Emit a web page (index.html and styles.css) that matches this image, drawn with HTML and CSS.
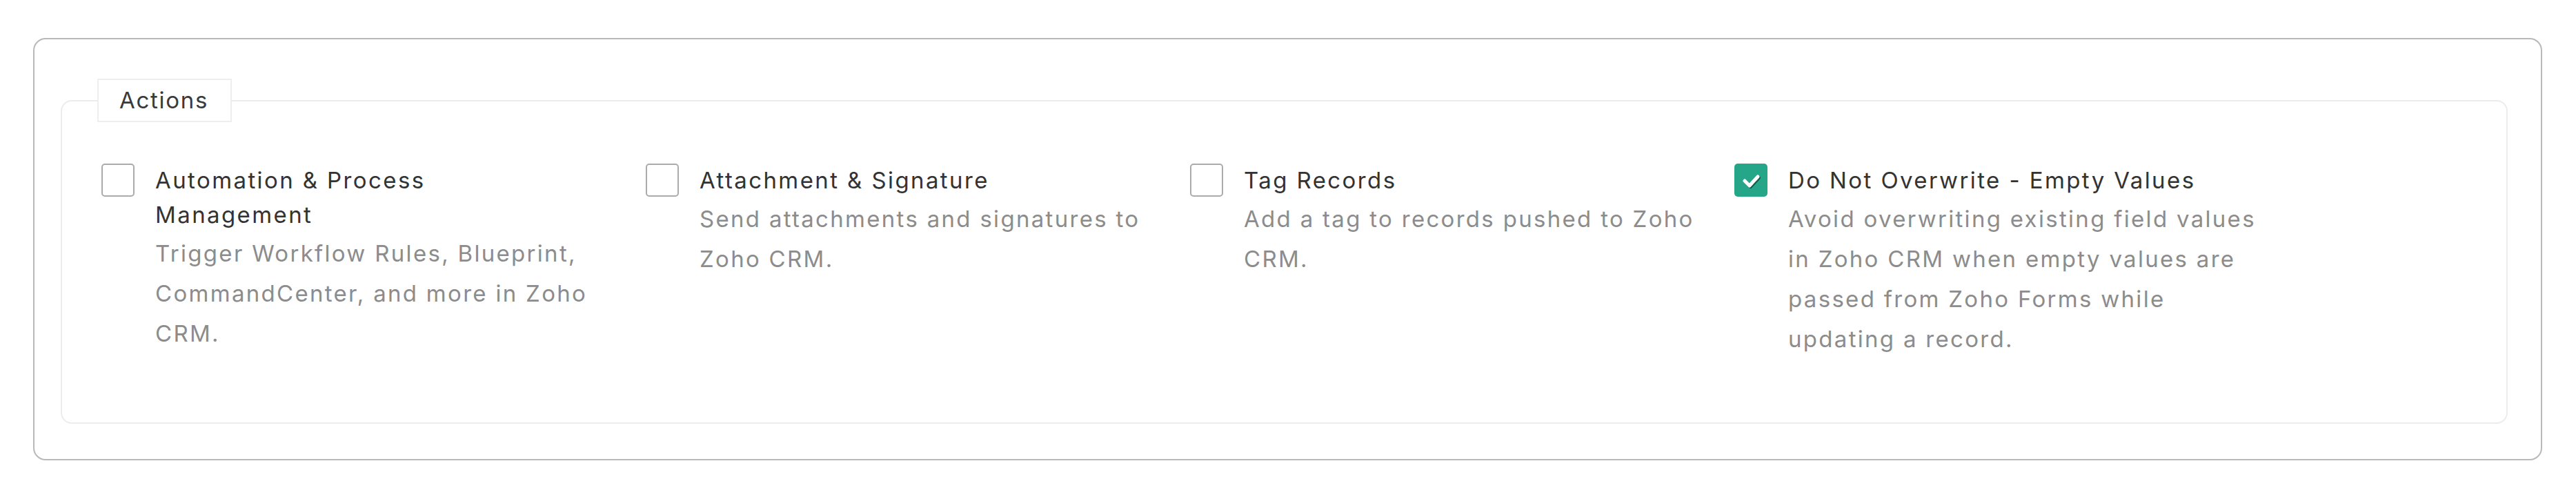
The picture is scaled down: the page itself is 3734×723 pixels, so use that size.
FILE: index.html
```html
<!DOCTYPE html>
<html lang="en">
<head>
<meta charset="utf-8">
<title>Actions</title>
<link rel="stylesheet" href="styles.css">
</head>
<body>
<div class="card">
  <fieldset class="group">
    <legend class="group-title">Actions</legend>
    <div class="options">
      <label class="option">
        <span class="box"></span>
        <span class="text">
          <span class="title">Automation &amp; Process Management</span>
          <span class="desc">Trigger Workflow Rules, Blueprint, CommandCenter, and more in Zoho CRM.</span>
        </span>
      </label>
      <label class="option">
        <span class="box"></span>
        <span class="text">
          <span class="title">Attachment &amp; Signature</span>
          <span class="desc">Send attachments and signatures to Zoho CRM.</span>
        </span>
      </label>
      <label class="option">
        <span class="box"></span>
        <span class="text">
          <span class="title">Tag Records</span>
          <span class="desc">Add a tag to records pushed to Zoho CRM.</span>
        </span>
      </label>
      <label class="option">
        <span class="box box-checked">
          <svg viewBox="0 0 48 48" width="48" height="48" aria-hidden="true">
            <polyline points="15,25 22,32 34,19" fill="none" stroke="#0f5c49" stroke-width="5" stroke-linecap="round" stroke-linejoin="round" transform="translate(1.5 1.5)"/>
            <polyline points="15,25 22,32 34,19" fill="none" stroke="#ffffff" stroke-width="5" stroke-linecap="round" stroke-linejoin="round"/>
          </svg>
        </span>
        <span class="text">
          <span class="title">Do Not Overwrite - Empty Values</span>
          <span class="desc">Avoid overwriting existing field values in Zoho CRM when empty values are passed from Zoho Forms while updating a record.</span>
        </span>
      </label>
    </div>
  </fieldset>
</div>
</body>
</html>
```

FILE: styles.css
```css
html, body {
  margin: 0;
  padding: 0;
  background: #ffffff;
}

body {
  font-family: Inter, "Noto Sans", "Liberation Sans", sans-serif;
  color: #333333;
  padding: 55px 49px 56px 48px;
}

.card {
  border: 2px solid #b9b9b9;
  border-radius: 18px;
  padding: 57px 48px 51px 38px;
}

.group {
  margin: 0;
  border: 2px solid #ececec;
  border-radius: 16px;
  padding: 0 0 92px 0;
  min-width: 0;
}

.group-title {
  margin-left: 51px;
  padding: 0 32px 0 30px;
  height: 59px;
  border: 2px solid #eeeeee;
  background: #ffffff;
  font-size: 33px;
  letter-spacing: 1.7px;
  line-height: 59px;
  color: #3a3a3a;
  box-sizing: content-box;
}

.options {
  display: flex;
  padding: 59px 0 0 57px;
}

.option {
  width: 789px;
  flex: 0 0 789px;
  display: flex;
  gap: 30px;
  align-items: flex-start;
}

.box {
  flex: 0 0 auto;
  width: 44px;
  height: 44px;
  margin-top: 1px;
  border: 2px solid #ababab;
  border-radius: 5px;
  background: #ffffff;
}

.box-checked {
  width: 48px;
  height: 48px;
  border: 0;
  background: #26a688;
  display: flex;
}

.text {
  display: flex;
  flex-direction: column;
  width: 700px;
}

.title {
  font-size: 33px;
  letter-spacing: 2.4px;
  line-height: 50px;
  color: #333333;
  max-width: 610px;
}

.desc {
  font-size: 33px;
  letter-spacing: 2.3px;
  line-height: 58px;
  color: #8c8c8c;
  margin-top: 2px;
}
```
